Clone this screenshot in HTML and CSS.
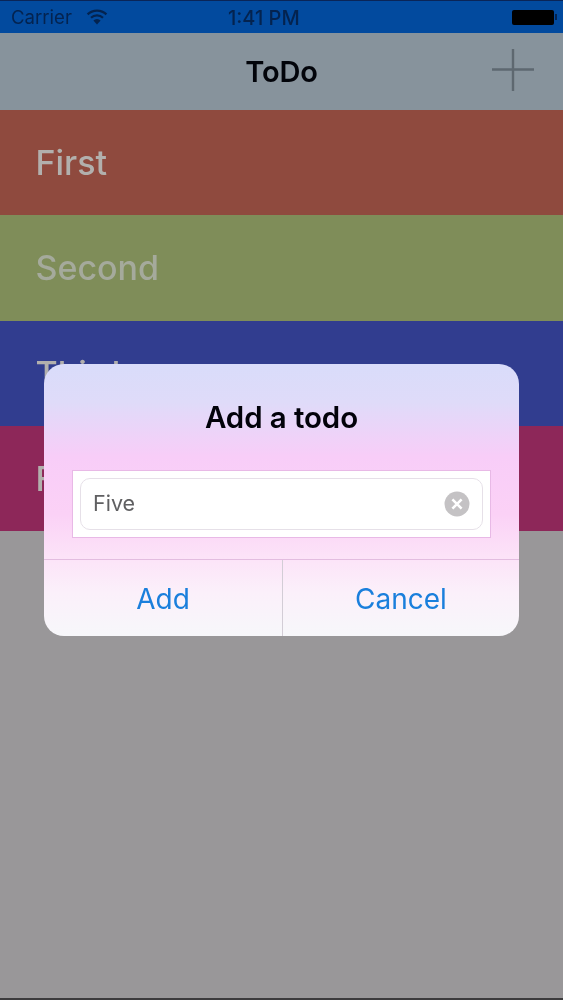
FILE: index.html
```html
<!DOCTYPE html>
<html lang="en">
<head>
<meta charset="utf-8">
<title>ToDo</title>
<link rel="stylesheet" href="styles.css">
</head>
<body>
<div class="app">
  <div class="status">
    <div class="status-left">
      <span>Carrier</span>
      <svg class="wifi" width="22" height="16" viewBox="0 0 22 16"><path d="M11 15.5l-3.6-4a5 5 0 0 1 7.2 0z" fill="#04234f"/><path d="M5 8.8a8.6 8.6 0 0 1 12 0" fill="none" stroke="#04234f" stroke-width="2.2"/><path d="M1.6 5.4a13.4 13.4 0 0 1 18.8 0" fill="none" stroke="#04234f" stroke-width="2.2"/></svg>
    </div>
    <span class="time">1:41 PM</span>
    <div class="battery"><span class="battery-body"></span><span class="battery-tip"></span></div>
  </div>
  <header class="nav">
    <h1 class="nav-title">ToDo</h1>
    <svg class="plus" width="44" height="44" viewBox="0 0 44 44"><path d="M22 1v42M1 21.5h42" stroke="#5e6870" stroke-width="2.4" fill="none"/></svg>
  </header>
  <ul class="list">
    <li class="row row-red"><span>First</span></li>
    <li class="row row-green"><span>Second</span></li>
    <li class="row row-blue"><span>Third</span></li>
    <li class="row row-pink"><span>Fourth</span></li>
  </ul>
  <div class="dialog">
    <h2 class="dialog-title">Add a todo</h2>
    <div class="field-wrap">
      <div class="field">
        <span class="field-text">Five</span>
        <svg class="clear" width="26" height="26" viewBox="0 0 26 26"><circle cx="13" cy="13" r="12.5" fill="#c4c2c4"/><path d="M8.4 8.4l9.2 9.2M17.6 8.4l-9.2 9.2" stroke="#fff" stroke-width="2.6" fill="none"/></svg>
      </div>
    </div>
    <div class="actions">
      <div class="action">Add</div>
      <div class="action action-cancel">Cancel</div>
    </div>
  </div>
</div>
</body>
</html>
```

FILE: styles.css
```css
* { box-sizing: border-box; }
html, body { margin: 0; padding: 0; }
body { font-family: Inter, "Liberation Sans", sans-serif; background: #999799; }
.app {
  position: relative;
  width: 563px;
  height: 1000px;
  overflow: hidden;
  background: #999799;
  border-top: 1px solid #0a2558;
  border-bottom: 2px solid #3c3b3d;
  display: flex;
  flex-direction: column;
  filter: blur(0.5px);
}
.status {
  height: 32px;
  background: #024a9e;
  color: #04234f;
  display: flex;
  align-items: center;
  justify-content: space-between;
  padding: 0 6px 0 11px;
  font-size: 18.6px;
  position: relative;
}
.status-left { display: flex; align-items: center; gap: 14px; }
.time { position: absolute; left: 228px; top: 5px; font-weight: 500; font-size: 20px; line-height: 24px; }
.battery { display: flex; align-items: center; gap: 1px; }
.battery-body { width: 42px; height: 15px; background: #000; border-radius: 2px; display: block; }
.battery-tip { width: 2px; height: 6px; background: #04234f; display: block; }
.nav {
  height: 77px;
  background: #87939c;
  display: flex;
  align-items: center;
  justify-content: center;
  position: relative;
}
.nav-title { margin: 0 0 1px; font-size: 29px; font-weight: 600; color: #02040a; letter-spacing: -0.2px; }
.plus { position: absolute; right: 28px; top: 15px; }
.list { list-style: none; margin: 0; padding: 0; }
.row {
  height: 105.25px;
  padding-left: 35.5px;
  display: flex;
  align-items: center;
  font-size: 34px;
  font-weight: 500;
  color: #b2b0ad;
}
.row-red { background: #8f4a3e; }
.row-green { background: #7f8d59; color: #a5aa9c; }
.row-blue { background: #313d8f; }
.row-pink { background: #8d2759; }
.dialog {
  position: absolute;
  left: 44px;
  top: 363px;
  width: 475px;
  height: 272px;
  border-radius: 20px;
  overflow: hidden;
  background: linear-gradient(180deg, #d9dcfa 0%, #dfdbf9 14%, #f8cdf8 34%, #fbd1f6 55%, #fce4f8 72%, #fbf0fa 84%, #f7f7fa 100%);
  display: flex;
  flex-direction: column;
}
.dialog-title {
  margin: 0;
  height: 106px;
  padding-top: 36px;
  text-align: center;
  font-size: 29.5px;
  line-height: 34px;
  font-weight: 600;
  color: #02020a;
  letter-spacing: -0.1px;
}
.field-wrap {
  margin: 0 28px;
  height: 68px;
  padding: 7px;
  background: #fff;
  border: 1px solid #e8b9e6;
}
.field {
  height: 100%;
  border: 1px solid #e6e0e8;
  border-radius: 10px;
  display: flex;
  align-items: center;
  justify-content: space-between;
  padding: 0 12px 0 12px;
}
.field-text { font-size: 21.5px; line-height: 26px; padding-bottom: 2px; color: #606062; }
.actions {
  margin-top: 21px;
  flex: 1;
  display: flex;
  border-top: 1px solid #e3bde0;
}
.action {
  width: 238px;
  display: flex;
  align-items: center;
  justify-content: center;
  padding-top: 2px;
  font-size: 28px;
  color: #1a7fdc;
}
.action-cancel { flex: 1; border-left: 1px solid #d3cdd6; }
```
